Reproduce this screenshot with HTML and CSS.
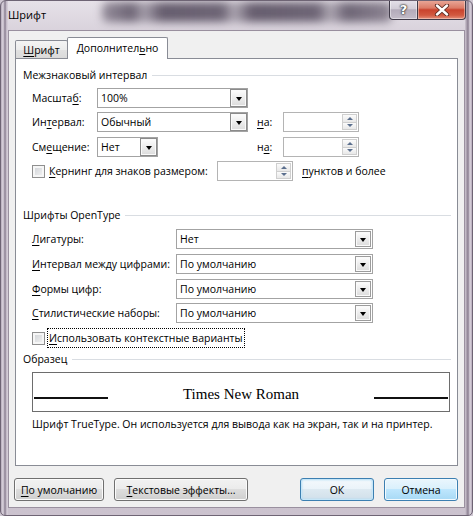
FILE: index.html
```html
<!DOCTYPE html>
<html lang="ru">
<head>
<meta charset="utf-8">
<title>Шрифт</title>
<link rel="stylesheet" href="styles.css">
</head>
<body>
<div class="window">
  <div class="titlebar">
    <div class="glass" aria-hidden="true"></div>
    <span class="title">Шрифт</span>
    <div class="caption">
      <div class="cb help"><span class="q">?</span></div>
      <div class="cb close">
        <svg width="16" height="12" viewBox="0 0 16 12"><path d="M3 1.5 L13 10.5 M13 1.5 L3 10.5" stroke="#5a2a22" stroke-width="4.2" stroke-linecap="round" fill="none"/><path d="M3 1.5 L13 10.5 M13 1.5 L3 10.5" stroke="#fff" stroke-width="2.4" stroke-linecap="round" fill="none"/></svg>
      </div>
    </div>
  </div>
  <div class="client">
    <div class="tabs">
      <div class="tab inactive"><span><u>Ш</u>рифт</span></div>
      <div class="tab active"><span>Дополнител<u>ь</u>но</span></div>
    </div>
    <div class="panel">
      <div class="gtitle gt1">Межзнаковый интервал</div>

      <div class="row r1">
        <span class="lbl1">Масшта<u>б</u>:</span>
        <div class="cell151">
          <div class="combo w151"><span class="val">100%</span><span class="ddbtn"><span class="tri"></span></span></div>
        </div>
      </div>
      <div class="row r2">
        <span class="lbl1">Ин<u>т</u>ервал:</span>
        <div class="cell151">
          <div class="combo w151"><span class="val">Обычный</span><span class="ddbtn"><span class="tri"></span></span></div>
        </div>
        <span class="na"><u>н</u>а:</span>
        <div class="spin"><span class="spinbtns"><span class="sb up"><span class="stri"></span></span><span class="sb dn"><span class="stri"></span></span></span></div>
      </div>
      <div class="row r3">
        <span class="lbl1">См<u>е</u>щение:</span>
        <div class="cell151">
          <div class="combo w61"><span class="val">Нет</span><span class="ddbtn"><span class="tri"></span></span></div>
        </div>
        <span class="na">н<u>а</u>:</span>
        <div class="spin"><span class="spinbtns"><span class="sb up"><span class="stri"></span></span><span class="sb dn"><span class="stri"></span></span></span></div>
      </div>
      <div class="row r4">
        <span class="kerncell"><span class="cbx"></span><span class="kernlbl"><u>К</u>ернинг для знаков размером:</span></span>
        <div class="spin"><span class="spinbtns"><span class="sb up"><span class="stri"></span></span><span class="sb dn"><span class="stri"></span></span></span></div>
        <span class="pts"><u>п</u>унктов и более</span>
      </div>

      <div class="gtitle gt2">Шрифты OpenType</div>

      <div class="row s1">
        <span class="lbl2"><u>Л</u>игатуры:</span>
        <div class="combo w197"><span class="val">Нет</span><span class="ddbtn"><span class="tri"></span></span></div>
      </div>
      <div class="row s2">
        <span class="lbl2"><u>И</u>нтервал между цифрами:</span>
        <div class="combo w197"><span class="val">По умолчанию</span><span class="ddbtn"><span class="tri"></span></span></div>
      </div>
      <div class="row s3">
        <span class="lbl2"><u>Ф</u>ормы цифр:</span>
        <div class="combo w197"><span class="val">По умолчанию</span><span class="ddbtn"><span class="tri"></span></span></div>
      </div>
      <div class="row s4">
        <span class="lbl2"><u>С</u>тилистические наборы:</span>
        <div class="combo w197"><span class="val">По умолчанию</span><span class="ddbtn"><span class="tri"></span></span></div>
      </div>
      <div class="row s5">
        <span class="cbx"></span><span class="focus"><u>И</u>спользовать контекстные варианты</span>
      </div>

      <div class="gtitle gt3">Образец</div>
      <div class="preview">
        <span class="pline"></span>
        <span class="ptext">Times New Roman</span>
        <span class="pline"></span>
      </div>
      <div class="desc">Шрифт TrueType. Он используется для вывода как на экран, так и на принтер.</div>
    </div>
    <div class="buttons">
      <div class="btn b1"><span><u>П</u>о умолчанию</span></div>
      <div class="btn b2"><span><u>Т</u>екстовые эффекты...</span></div>
      <div class="btn ok"><span>ОК</span></div>
      <div class="btn cancel"><span>Отмена</span></div>
    </div>
  </div>
</div>
</body>
</html>
```
FILE: styles.css
```css
* { box-sizing: border-box; }
html, body { margin: 0; padding: 0; }
body {
  width: 473px;
  height: 516px;
  overflow: hidden;
  background: #cfc7d2;
  font-family: "Open Sans", "Noto Sans", sans-serif;
  font-size: 10.5px;
  color: #000;
}
u { text-decoration: underline; text-underline-offset: 2px; text-decoration-thickness: 1px; }

.window {
  width: 473px;
  height: 516px;
  border: 1px solid #6e6474;
  border-radius: 6px 6px 5px 5px;
  padding: 0 7px 7px 7px;
  display: flex;
  flex-direction: column;
  background:
    linear-gradient(to right, #b5aab9 0px, #ddd6e0 2px, #8a7e90 4px, #d8d0db 6px, #cfc7d2 7px, rgba(0,0,0,0) 7px, rgba(0,0,0,0) 464px, #cfc7d2 464px, #8a7e90 467px, #ddd6e0 469px, #b5aab9 471px),
    linear-gradient(to bottom, #e6e1e8 0px, #d9d2dc 30px, #cbc2ce 100%);
  overflow: hidden;
}

.titlebar {
  height: 29px;
  position: relative;
  display: flex;
  align-items: flex-start;
  flex: none;
}
.glass {
  position: absolute;
  left: 94px;
  top: 1px;
  width: 290px;
  height: 20px;
  filter: blur(4px);
  background:
    linear-gradient(to right, rgba(60,50,70,0.45) 0px, rgba(60,50,70,0.7) 30px, rgba(60,50,70,0.35) 42px, rgba(60,50,70,0.75) 60px, rgba(60,50,70,0.7) 120px, rgba(60,50,70,0.3) 132px, rgba(60,50,70,0.75) 150px, rgba(60,50,70,0.7) 215px, rgba(60,50,70,0.3) 228px, rgba(60,50,70,0.7) 245px, rgba(60,50,70,0.5) 290px);
  border-radius: 6px;
}
.title {
  position: relative;
  margin-top: 6px;
  line-height: 16px;
  font-size: 11px;
}
.caption {
  position: relative;
  margin-left: auto;
  margin-top: -1px;
  margin-right: -1px;
  display: flex;
}
.cb {
  height: 20px;
  border: 1px solid #3f3a48;
  border-top: none;
  display: flex;
  align-items: center;
  justify-content: center;
}
.help {
  width: 29px;
  border-radius: 0 0 0 4px;
  background: linear-gradient(#e6e2ea 0%, #d2ccd7 45%, #b3abba 52%, #c3bcc8 100%);
  box-shadow: inset 0 0 0 1px rgba(255,255,255,0.45);
}
.q {
  font-family: "DejaVu Sans", sans-serif;
  font-weight: bold;
  font-size: 13px;
  color: #fff;
  line-height: 1;
  text-shadow: 0 0 1px #333, 0 0 2px #333, 0 0 2px #444;
}
.close {
  width: 48px;
  border-left: none;
  border-radius: 0 0 4px 0;
  background: linear-gradient(#eaab9c 0%, #db7b67 42%, #c9432d 52%, #d25940 80%, #e4907c 100%);
  box-shadow: inset 0 0 0 1px rgba(255,230,220,0.45);
}
.close svg { display: block; }

.client {
  flex: 1;
  background: #f0f0f0;
  border: 1px solid #9a909f;
  padding: 6px 6px 0 6px;
  display: flex;
  flex-direction: column;
}

.tabs {
  display: flex;
  align-items: flex-end;
  height: 21px;
  flex: none;
}
.tab {
  border: 1px solid #898c95;
  border-bottom: none;
  border-radius: 2px 2px 0 0;
  display: flex;
  align-items: center;
  justify-content: center;
  line-height: 16px;
}
.tab.inactive {
  width: 53px;
  height: 18px;
  margin-right: -1px;
  padding-top: 1px;
  background: linear-gradient(#f4f4f4 0%, #ececec 50%, #e1e1e1 51%, #dadada 100%);
}
.tab.active {
  width: 101px;
  height: 22px;
  margin-bottom: -1px;
  position: relative;
  z-index: 1;
  background: #fff;
  padding-bottom: 1px;
}

.panel {
  height: 408px;
  flex: none;
  background: #fff;
  border: 1px solid #898c95;
  padding: 0 6px 0 7px;
  display: flex;
  flex-direction: column;
}

.gtitle {
  display: flex;
  align-items: center;
  height: 16px;
  line-height: 16px;
  gap: 5px;
  white-space: nowrap;
}
.gtitle::after {
  content: "";
  flex: 1;
  height: 1px;
  background: #d9dde2;
  margin-top: 1px;
}
.gt1 { margin-top: 8px; }
.gt2 { margin-top: 26px; }
.gt3 { margin-top: 3px; }

.row {
  display: flex;
  align-items: center;
  height: 20px;
  margin-left: 9px;
  white-space: nowrap;
  flex: none;
}
.r1 { margin-top: 5px; }
.r2 { margin-top: 4px; }
.r3 { margin-top: 5px; }
.r4 { margin-top: 4px; }
.s1 { margin-top: 6px; }
.s2 { margin-top: 5px; }
.s3 { margin-top: 5px; }
.s4 { margin-top: 4px; }
.s5 { margin-top: 5px; }

.lbl1 { width: 65px; }
.lbl2 { width: 144px; }
.cell151 { width: 151px; display: flex; }
.na { margin-left: 9px; width: 26px; }

.combo {
  height: 20px;
  border: 1px solid #a3a3a3;
  background: #fff;
  display: flex;
  align-items: center;
  padding-left: 3px;
}
.w151 { width: 151px; }
.w61 { width: 61px; }
.w197 { width: 197px; }
.combo .val { flex: 1; overflow: hidden; }
.ddbtn {
  width: 17px;
  height: 18px;
  border: 1px solid #8b8b8b;
  background: linear-gradient(#fdfdfd 0%, #ededed 50%, #dcdcdc 100%);
  box-shadow: inset 0 0 0 1px #fafafa;
  display: flex;
  align-items: center;
  justify-content: center;
}
.w197 .ddbtn { width: 16px; height: 16px; margin-right: 1px; border-color: #9c9c9c; }
.tri {
  width: 0;
  height: 0;
  border-left: 3.5px solid transparent;
  border-right: 3.5px solid transparent;
  border-top: 4px solid #000;
  margin-top: 1px;
}

.spin {
  width: 76px;
  height: 20px;
  border: 1px solid #b4b4b4;
  background: #fff;
  display: flex;
  justify-content: flex-end;
  padding: 1px;
}
.spinbtns {
  width: 15px;
  display: flex;
  flex-direction: column;
}
.sb {
  flex: 1;
  border: 1px solid #cfcfcf;
  background: linear-gradient(#fbfbfb, #e8e8e8);
  display: flex;
  align-items: center;
  justify-content: center;
}
.sb.dn { border-top: none; }
.stri {
  width: 0;
  height: 0;
  border-left: 3px solid transparent;
  border-right: 3px solid transparent;
}
.up .stri { border-bottom: 3px solid #5b6f8e; }
.dn .stri { border-top: 3px solid #5b6f8e; }

.kerncell { width: 185px; display: flex; align-items: center; }
.kernlbl { margin-left: 4px; }
.pts { margin-left: 9px; }

.cbx {
  width: 13px;
  height: 13px;
  flex: none;
  border: 1px solid #8f8f8f;
  background: linear-gradient(135deg, #cdd0d4 0%, #f5f5f5 100%);
  box-shadow: inset 0 0 0 2px #f6f6f6;
}
.focus {
  margin-left: 2px;
  height: 20px;
  display: flex;
  align-items: center;
  border: 1px dotted #000;
  padding: 0 1px;
}

.preview {
  margin-top: 5px;
  margin-left: 9px;
  width: 418px;
  height: 40px;
  flex: none;
  border: 1px solid #6d6d6d;
  display: flex;
  padding: 0 1px;
}
.pline {
  width: 74px;
  height: 2px;
  background: #111;
  margin-top: 24px;
  flex: none;
}
.ptext {
  flex: 1;
  text-align: center;
  font-family: "Liberation Serif", "Times New Roman", serif;
  font-size: 15px;
  line-height: 38px;
  padding-top: 2px;
}
.desc {
  margin-top: 4px;
  margin-left: 9px;
  height: 16px;
  line-height: 16px;
  white-space: nowrap;
}

.buttons {
  display: flex;
  margin-top: 12px;
  margin-left: -1px;
  height: 23px;
  flex: none;
}
.btn {
  height: 23px;
  border: 1px solid #707070;
  border-radius: 3px;
  background: linear-gradient(#f2f2f2 0%, #ebebeb 49%, #dddddd 50%, #cfcfcf 100%);
  box-shadow: inset 0 0 0 1px #fbfbfb;
  display: flex;
  align-items: center;
  justify-content: center;
  white-space: nowrap;
}
.b1 { width: 90px; }
.b2 { width: 134px; margin-left: 10px; }
.ok {
  width: 74px;
  margin-left: auto;
  border-color: #3c7fb1;
  background: linear-gradient(#f4f9fc 0%, #eaf3f9 49%, #dde9f1 50%, #d1e0ea 100%);
  box-shadow: inset 0 0 0 1px #c6e6f8, inset 0 0 2px 1px #a7d8f4;
}
.cancel {
  width: 74px;
  margin-left: 10px;
  border-color: #3c7fb1;
  background: linear-gradient(#eaf6fd 0%, #d9f0fc 49%, #bee6fd 50%, #a7d9f5 100%);
  box-shadow: inset 0 0 0 1px #f2fafe;
}
```
